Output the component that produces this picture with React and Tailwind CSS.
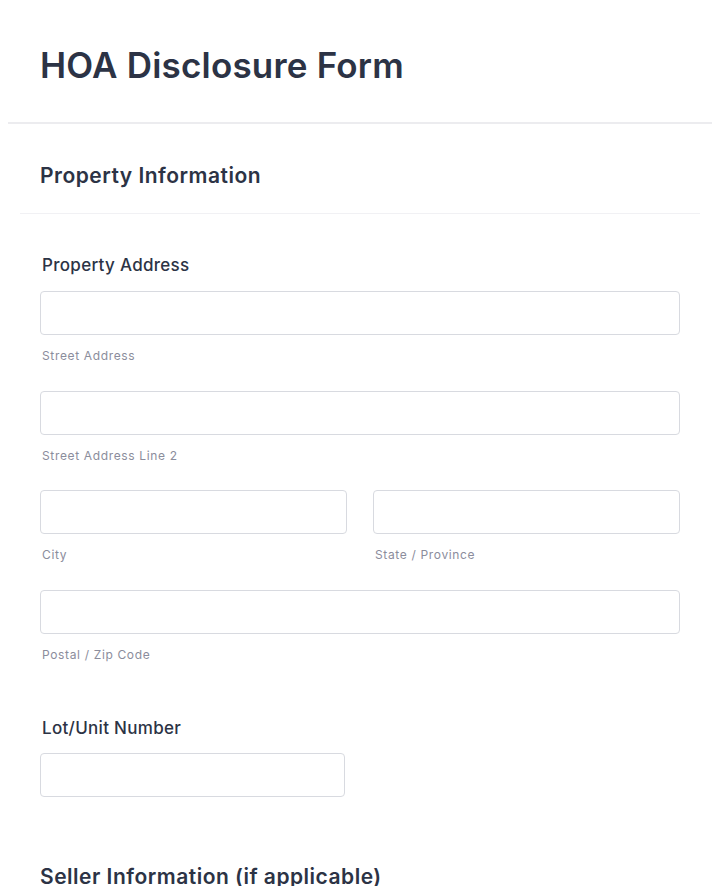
export default function App() {
  const font = { fontFamily: 'Inter, "Noto Sans", sans-serif' };
  const inputCls =
    "block h-[44px] w-full rounded-[4px] border border-[#d8dae0] bg-white outline-none";
  const subCls = "mt-[13px] pl-[2px] text-[12px] leading-[16px] tracking-[0.65px] text-[#8b8d9c]";

  return (
    <div className="min-h-[886px] w-[720px] overflow-hidden bg-white text-[#2c3345]" style={font}>
      {/* Form header */}
      <div className="h-[122px] px-10 pt-[45px]">
        <h1 className="text-[35px] font-semibold leading-[40px] tracking-[0.2px]">HOA Disclosure Form</h1>
      </div>
      <div className="mx-2 h-[2px] bg-[#ececef]" />

      {/* Property Information section */}
      <div className="mt-[38px] px-10">
        <h2 className="text-[21px] font-semibold leading-[28px] tracking-[0.5px]">Property Information</h2>
      </div>
      <div className="mx-5 mt-[23px] h-px bg-[#f1f1f4]" />

      <div className="px-10">
        <label className="mt-[39px] block pl-[2px] text-[17px] font-medium leading-[24px] tracking-[0.3px]">
          Property Address
        </label>

        <div className="mt-[14px]">
          <input className={inputCls} />
          <p className={subCls}>Street Address</p>
        </div>

        <div className="mt-[27px]">
          <input className={inputCls} />
          <p className={subCls}>Street Address Line 2</p>
        </div>

        <div className="mt-[26px] grid grid-cols-2 gap-x-[26px]">
          <div>
            <input className={inputCls} />
            <p className={subCls}>City</p>
          </div>
          <div>
            <input className={inputCls} />
            <p className={subCls}>State / Province</p>
          </div>
        </div>

        <div className="mt-[27px]">
          <input className={inputCls} />
          <p className={subCls}>Postal / Zip Code</p>
        </div>

        <label className="mt-[53px] block pl-[2px] text-[17px] font-medium leading-[24px] tracking-[0.3px]">
          Lot/Unit Number
        </label>
        <div className="mt-[13px] w-[305px]">
          <input className={inputCls} />
        </div>

        <h2 className="mt-[66px] text-[21px] font-semibold leading-[28px] tracking-[0.5px]">
          Seller Information (if applicable)
        </h2>
      </div>
    </div>
  );
}
